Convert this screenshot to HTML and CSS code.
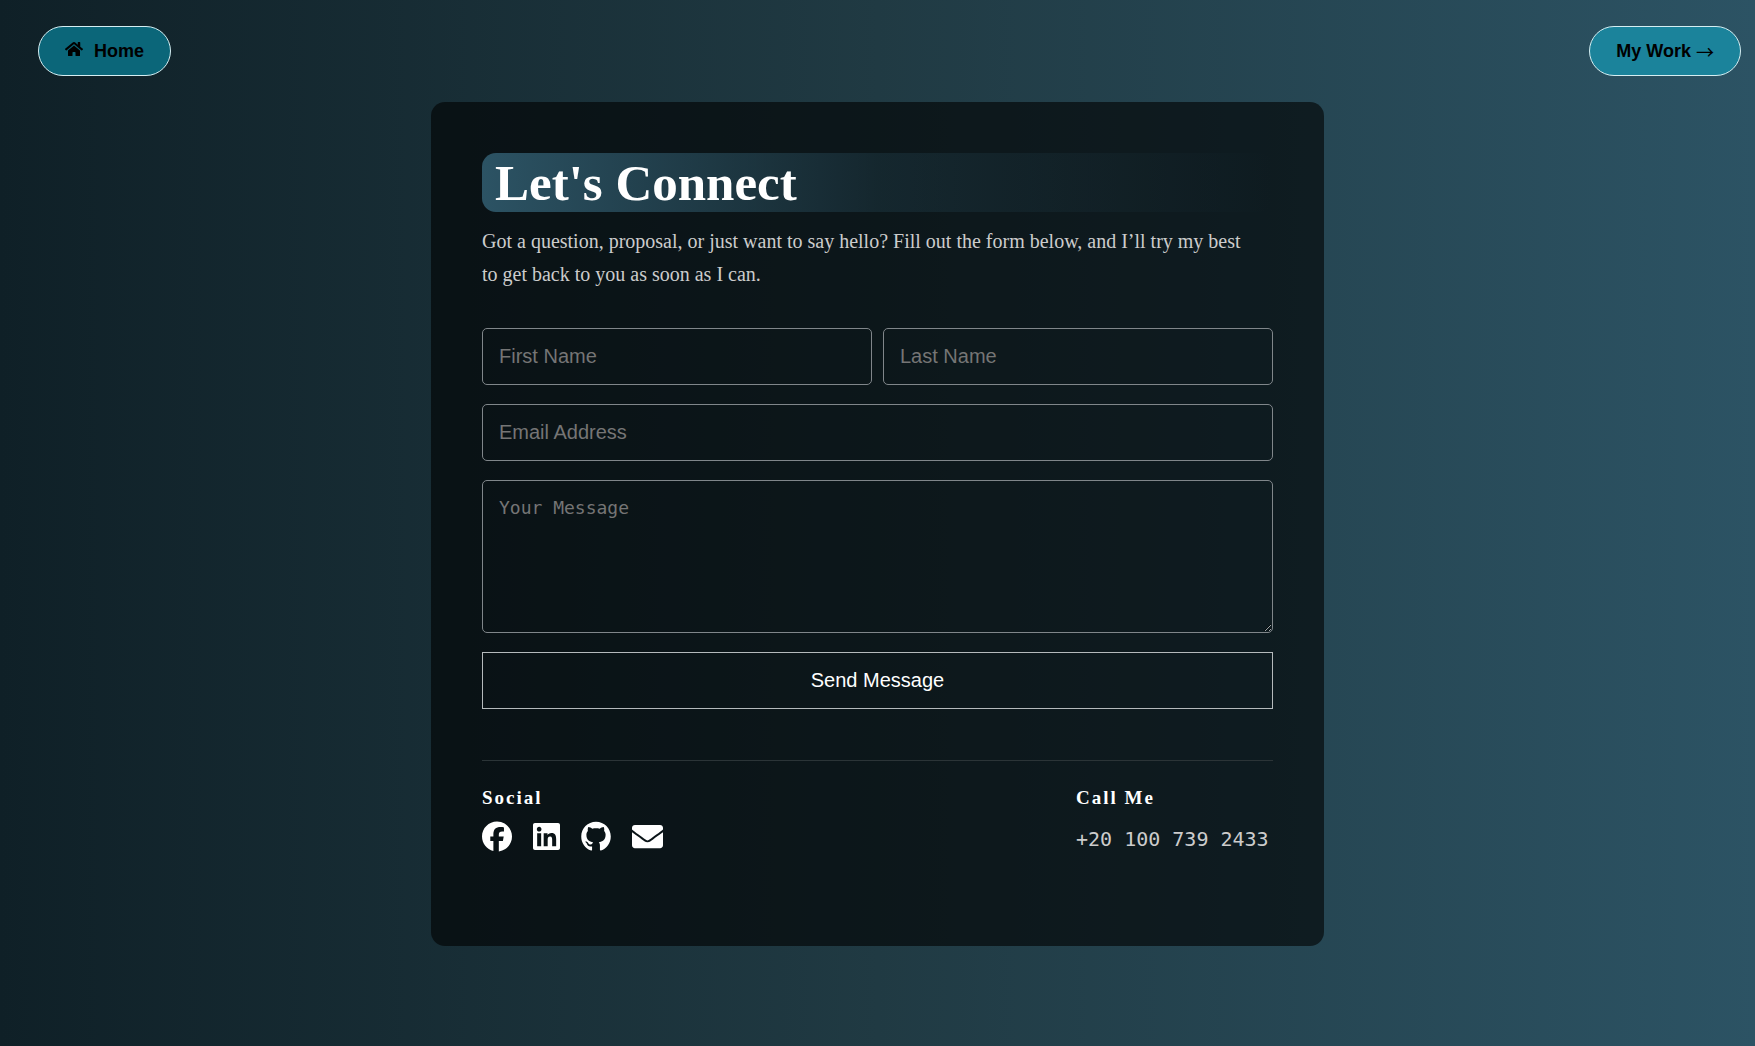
FILE: index.html
```html
<!DOCTYPE html>
<html lang="en">
<head>
<meta charset="utf-8">
<meta name="viewport" content="width=device-width, initial-scale=1">
<title>Let's Connect</title>
<link rel="stylesheet" href="styles.css">
</head>
<body>
<nav class="nav">
  <a class="pill pill-home" href="#home">
    <svg class="home-icon" viewBox="0 0 576 512" aria-hidden="true"><path d="M280.37 148.26L96 300.11V464a16 16 0 0 0 16 16l112.06-.29a16 16 0 0 0 15.92-16V368a16 16 0 0 1 16-16h64a16 16 0 0 1 16 16v95.64a16 16 0 0 0 16 16.05L464 480a16 16 0 0 0 16-16V300L295.67 148.26a12.19 12.19 0 0 0-15.3 0zM571.6 251.47L488 182.56V44.05a12 12 0 0 0-12-12h-56a12 12 0 0 0-12 12v72.61L318.47 43a48 48 0 0 0-61 0L4.34 251.47a12 12 0 0 0-1.6 16.9l25.5 31A12 12 0 0 0 45.15 301l235.22-193.74a12.19 12.19 0 0 1 15.3 0L530.9 301a12 12 0 0 0 16.9-1.6l25.5-31a12 12 0 0 0-1.7-16.93z"/></svg>
    <span>Home</span>
  </a>
  <a class="pill pill-work" href="#work">My Work <span class="arrow">→</span></a>
</nav>
<main class="card">
  <h1 class="title">Let's Connect</h1>
  <p class="intro">Got a question, proposal, or just want to say hello? Fill out the form below, and I’ll try my best to get back to you as soon as I can.</p>
  <form class="form">
    <div class="names">
      <input class="field" type="text" placeholder="First Name" aria-label="First Name">
      <input class="field" type="text" placeholder="Last Name" aria-label="Last Name">
    </div>
    <input class="field" type="email" placeholder="Email Address" aria-label="Email Address">
    <textarea class="field message" placeholder="Your Message" aria-label="Your Message"></textarea>
    <button class="send" type="submit">Send Message</button>
  </form>
  <footer class="contact">
    <section>
      <h2 class="label">Social</h2>
      <div class="social">
        <a href="#facebook" aria-label="Facebook"><svg class="round" viewBox="0 0 512 512"><path d="M512 256C512 114.600 397.400 0 256 0S0 114.600 0 256c0 120 82.700 220.800 194.200 248.500V334.200h-52.800V256h52.800v-33.700c0-87.100 39.400-127.500 125-127.500 16.200 0 44.200 3.200 55.700 6.400V172c-6-.6-16.500-1-29.600-1-42 0-58.200 15.900-58.200 57.200V256h83.600l-14.400 78.200h-69.300v175.900C413.800 494.800 512 386.900 512 256z"/></svg></a>
        <a href="#linkedin" aria-label="LinkedIn"><svg class="narrow" viewBox="0 0 448 512"><path d="M416 32H31.900C14.300 32 0 46.500 0 64.300v383.400C0 465.500 14.300 480 31.900 480H416c17.600 0 32-14.500 32-32.300V64.300c0-17.800-14.400-32.300-32-32.300zM135.400 416H69V202.200h66.500V416zm-33.200-243c-21.300 0-38.500-17.300-38.500-38.500S80.900 96 102.200 96c21.200 0 38.500 17.300 38.500 38.500 0 21.300-17.200 38.500-38.500 38.500zm282.100 243h-66.400V312c0-24.800-.5-56.700-34.500-56.700-34.600 0-39.900 27-39.900 54.900V416h-66.400V202.200h63.700v29.200h.9c8.900-16.800 30.600-34.500 62.900-34.500 67.200 0 79.700 44.300 79.700 101.900V416z"/></svg></a>
        <a href="#github" aria-label="GitHub"><svg class="round" viewBox="0 0 512 512"><path fill-rule="evenodd" d="M256 4C114 4 4 116 4 256c0 112 70 207 168 240 13 2 17-6 17-13v-58c-6 2-16 2-25 2-36 0-53-20-63-48-5-12-12-20-21-26-8-5-8-10 0-11 18-2 32 8 42 24 18 29 44 31 68 20 2-15 9-27 17-33-64-8-115-34-115-126 0-28 9-49 26-67-4-17-4-43 5-64 22-2 48 11 69 26 42-11 86-11 128 0 21-15 47-28 69-26 9 21 9 47 5 64 17 18 26 39 26 67 0 92-53 118-117 126 11 9 20 27 20 54v76c0 7 5 15 18 13 98-33 167-128 167-240C508 116 398 4 256 4z"/></svg></a>
        <a href="#mail" aria-label="Email"><svg viewBox="0 0 512 512"><path d="M502.300 190.800c3.900-3.100 9.700-.2 9.700 4.700V400c0 26.500-21.500 48-48 48H48c-26.500 0-48-21.500-48-48V195.600c0-5 5.700-7.800 9.700-4.700 22.400 17.400 52.100 39.500 154.100 113.600 21.100 15.400 56.700 47.800 92.200 47.600 35.700.3 72-32.800 92.300-47.600 102-74.100 131.600-96.300 154-113.700zM256 320c23.200.4 56.600-29.200 73.400-41.400 132.700-96.300 142.800-104.700 173.400-128.700 5.800-4.500 9.200-11.500 9.200-18.900v-19c0-26.500-21.500-48-48-48H48c-26.500 0-48 21.500-48 48v19c0 7.400 3.400 14.300 9.200 18.900 30.600 23.900 40.700 32.400 173.400 128.700 16.800 12.200 50.200 41.800 73.400 41.400z"/></svg></a>
      </div>
    </section>
    <section class="call">
      <h2 class="label">Call Me</h2>
      <a class="phone" href="tel:+201007392433">+20 100 739 2433</a>
    </section>
  </footer>
</main>
</body>
</html>
```
FILE: styles.css
```css
* { box-sizing: border-box; }

body {
  margin: 0;
  min-height: 100vh;
  padding-bottom: 100px;
  background: linear-gradient(to right, #0f2027, #203a43, #2c5364);
  color: #fff;
  font-family: "Liberation Serif", "Times New Roman", serif;
}

.nav {
  display: flex;
  justify-content: space-between;
  padding: 26px 14px 26px 38px;
}

.pill {
  display: flex;
  align-items: center;
  height: 50px;
  padding: 0 26px;
  border: 1px solid #d5eef2;
  border-radius: 25px;
  background: #1b839b;
  color: #000;
  font: bold 18px/22px "Liberation Sans", Arial, sans-serif;
  text-decoration: none;
}

.pill-home {
  gap: 11px;
  background: #0b6679;
}

.pill-work { gap: 5px; }

.arrow {
  font-family: "Noto Sans CJK JP", sans-serif;
  font-weight: normal;
}

.home-icon {
  width: 18px;
  height: 16px;
  margin-bottom: 5px;
}

.card {
  max-width: 893px;
  min-height: 844px;
  margin: 0 auto;
  padding: 51px;
  border-radius: 14px;
  background: rgba(0, 0, 0, 0.6);
}

.title {
  margin: 0 0 13px;
  padding: 2px 0 0 13px;
  border-radius: 14px;
  background: linear-gradient(to right, #2c5364, rgba(44, 83, 100, 0.27) 50%, rgba(44, 83, 100, 0));
  font-size: 51px;
  line-height: 57px;
}

.intro {
  margin: 0 0 37px;
  padding-right: 24px;
  color: #ccc;
  font-size: 20px;
  line-height: 33px;
}

.form {
  display: flex;
  flex-direction: column;
  gap: 19px;
}

.names {
  display: grid;
  grid-template-columns: 1fr 1fr;
  gap: 11px;
}

.field {
  width: 100%;
  height: 57px;
  padding: 16px;
  border: 1px solid #80868a;
  border-radius: 5px;
  background: transparent;
  color: #fff;
  font: 20px "Liberation Sans", Arial, sans-serif;
}

.field::placeholder { color: #757575; }

.message {
  display: block;
  height: 153px;
  resize: vertical;
  font: 18px/22px "DejaVu Sans Mono", monospace;
}

.send {
  height: 57px;
  border: 1px solid #b5babc;
  background: transparent;
  color: #fff;
  font: 20px "Liberation Sans", Arial, sans-serif;
}

.contact {
  display: flex;
  justify-content: space-between;
  margin-top: 51px;
  padding-top: 26px;
  border-top: 1px solid #2b3437;
}

.label {
  margin: 0 0 12px;
  font-size: 19px;
  line-height: 22px;
  letter-spacing: 2px;
}

.social {
  display: flex;
  align-items: center;
  gap: 21px;
}

.social svg {
  display: block;
  width: 31px;
  height: 31px;
  fill: #fff;
}

.social .narrow { width: 27px; }

.social .round { width: 30px; }

.call { min-width: 197px; }

.phone {
  display: block;
  color: #ccc;
  font: 20px/36px "DejaVu Sans Mono", monospace;
  text-decoration: none;
}
```
